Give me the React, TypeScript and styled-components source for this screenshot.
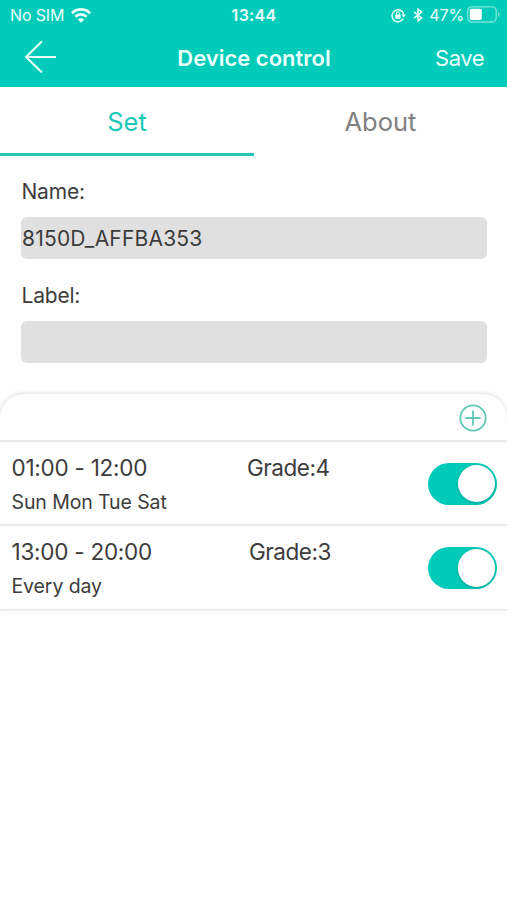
import React, { useState } from 'react';
import styled, { createGlobalStyle } from 'styled-components';

const teal = '#03cbb9';

const GlobalStyle = createGlobalStyle`
  * { box-sizing: border-box; }
  body {
    margin: 0;
    background: #fefefe;
    color: #3c3c3c;
    font-family: Inter, "Liberation Sans", sans-serif;
  }
`;

const Screen = styled.div`
  width: 507px;
  height: 900px;
  overflow: hidden;
  background: #fefefe;
`;

const PlainButton = styled.button`
  padding: 0;
  border: 0;
  background: none;
  color: inherit;
  font: inherit;
`;

const TopArea = styled.header`
  height: 87px;
  background: ${teal};
  color: #e9fffc;
`;

const StatusBar = styled.div`
  display: grid;
  grid-template-columns: 1fr auto 1fr;
  align-items: center;
  height: 30px;
  padding: 0 7px 0 10px;
  font-size: 16px;
  line-height: 30px;
`;

const StatusGroup = styled.div<{ $end?: boolean }>`
  display: flex;
  align-items: center;
  justify-content: ${(p) => (p.$end ? 'flex-end' : 'flex-start')};
  svg { flex: none; }
`;

const Carrier = styled.span`
  margin-right: 7px;
  letter-spacing: -0.15px;
`;

const Clock = styled.span`
  font-weight: 600;
  letter-spacing: 0.3px;
  transform: translateX(-1px);
`;

const Percent = styled.span`
  margin: 0 3px 0 6px;
  letter-spacing: -0.15px;
`;

const NavBar = styled.nav`
  display: grid;
  grid-template-columns: 1fr auto 1fr;
  align-items: center;
  height: 56px;
  padding: 0 23px 0 24px;
`;

const BackButton = styled(PlainButton)`
  display: flex;
  justify-self: start;
  margin-top: -2px;
`;

const Title = styled.h1`
  margin: 0;
  font-size: 22px;
  font-weight: 600;
`;

const SaveButton = styled(PlainButton)`
  justify-self: end;
  font-size: 22px;
  letter-spacing: -0.5px;
`;

const Tabs = styled.div`
  display: grid;
  grid-template-columns: 254px 253px;
  height: 68.5px;
`;

const Tab = styled(PlainButton)<{ $active: boolean }>`
  padding-top: 3px;
  font-size: 25.5px;
  color: ${(p) => (p.$active ? '#1ac9b8' : '#808080')};
  border-bottom: 3px solid ${(p) => (p.$active ? '#22c5b6' : 'transparent')};
`;

const Form = styled.div`
  padding: 22.5px 20px 0 21px;
`;

const Field = styled.label`
  display: block;
  height: 104px;
  font-size: 21px;
  line-height: 28px;
`;

const FieldName = styled.span`
  display: block;
  height: 39px;
  padding-left: 0.5px;
  letter-spacing: -0.2px;
`;

const TextInput = styled.input`
  display: block;
  width: 466px;
  height: 42px;
  padding: 0 0 0 1px;
  border: 0;
  border-radius: 6px;
  outline: none;
  background: #e0e0e0;
  color: inherit;
  font: inherit;
  letter-spacing: 0.2px;
`;

const Panel = styled.section`
  margin-top: 8px;
  border-radius: 24px 24px 0 0;
  background: #fefefe;
  box-shadow: 0 -1px 4px rgba(0, 0, 0, 0.12);
  clip-path: inset(-8px 0 0 0);
`;

const PanelHeader = styled.div`
  display: flex;
  justify-content: flex-end;
  align-items: center;
  height: 47.5px;
  padding: 3px 20px 0 0;
  border-bottom: 2px solid #e8e8e8;
`;

const AddButton = styled(PlainButton)`
  display: flex;
`;

const Row = styled.div`
  display: grid;
  grid-template-columns: 235.5px 1fr 69px;
  height: 84.5px;
  padding: 0 10px 0 11.5px;
  border-bottom: 2px solid #e8e8e8;
`;

const Schedule = styled.div`
  padding-top: 12px;
`;

const Line = styled.div`
  font-size: 22.5px;
  line-height: 28px;
  letter-spacing: -0.25px;
  white-space: nowrap;
`;

const Days = styled.div`
  margin-top: 6px;
  font-size: 19.5px;
  line-height: 28px;
  letter-spacing: -0.1px;
`;

const Grade = styled(Line)<{ $inset: number }>`
  padding-top: 12px;
  padding-left: ${(p) => p.$inset}px;
  letter-spacing: -0.45px;
`;

const Toggle = styled(PlainButton)<{ $on: boolean }>`
  display: flex;
  align-items: center;
  justify-content: ${(p) => (p.$on ? 'flex-end' : 'flex-start')};
  width: 69px;
  height: 42px;
  margin-top: 21px;
  padding: 0 2px;
  border-radius: 21px;
  background: ${(p) => (p.$on ? teal : '#d8d8d8')};
`;

const Knob = styled.span`
  width: 37.5px;
  height: 37.5px;
  border-radius: 50%;
  background: #fff;
  box-shadow: 0 1px 3px rgba(0, 60, 55, 0.3);
`;

const WifiIcon = () => (
  <svg width="20" height="15" viewBox="0 0 20 15" fill="none" stroke="currentColor" strokeWidth="2.7">
    <path d="M1 5.2C6 .2 14 .2 19 5.2" />
    <path d="M4.3 8.7c3.2-3.1 8.2-3.1 11.4 0" />
    <path d="M10 14.8 6.8 11.5c1.8-1.8 4.6-1.8 6.4 0Z" fill="currentColor" stroke="none" />
  </svg>
);

const LockIcon = () => (
  <svg width="15" height="15" viewBox="0 0 15 15" fill="none" stroke="currentColor" strokeWidth="1.4">
    <path d="M12.2 10.7A6 6 0 1 1 12.8 6.3" />
    <path d="M10.4 6.4H15l-2.2 3Z" fill="currentColor" stroke="none" />
    <rect x="4.2" y="6.5" width="5.4" height="4.2" rx=".6" fill="currentColor" stroke="none" />
    <path d="M5.4 7V5.4a1.5 1.5 0 0 1 3 0V7" strokeWidth="1.1" />
  </svg>
);

const BluetoothSvg = styled.svg`
  margin-left: 7px;
`;

const BluetoothIcon = () => (
  <BluetoothSvg width="10" height="14" viewBox="0 0 10 14" fill="none" stroke="currentColor" strokeWidth="1.5">
    <path d="m1 3.9 7.6 6L5 12.8V1.2l3.6 2.9L1 10.1" />
  </BluetoothSvg>
);

const BatterySvg = styled.svg`
  margin-top: -1px;
`;

const BatteryIcon = () => (
  <BatterySvg width="33" height="17" viewBox="0 0 33 17" fill="none">
    <rect x=".8" y=".8" width="28.4" height="15.2" rx="4" stroke="#7be5da" strokeWidth="1.3" />
    <rect x="2.8" y="2.8" width="12" height="11.2" rx="1.8" fill="#fff" />
    <path d="M31 6v5c2-.8 2-4.2 0-5Z" fill="#7be5da" />
  </BatterySvg>
);

const ArrowIcon = () => (
  <svg width="33" height="34" viewBox="0 0 33 34" fill="none" stroke="currentColor" strokeWidth="2">
    <path d="M32 17H2M18 1.2 2 17l16 15.5" />
  </svg>
);

const PlusIcon = () => (
  <svg width="28" height="28" viewBox="0 0 28 28" fill="none" stroke="#62c9b6" strokeWidth="1.8">
    <circle cx="14" cy="14" r="12.7" />
    <path d="M14 6.5v15M6.5 14h15" />
  </svg>
);

const schedules = [
  { time: '01:00 - 12:00', days: 'Sun Mon Tue Sat', grade: 4, inset: 0 },
  { time: '13:00 - 20:00', days: 'Every day', grade: 3, inset: 2 },
];

export default function App() {
  const [tab, setTab] = useState('Set');
  const [enabled, setEnabled] = useState([true, true]);
  return (
    <Screen>
      <GlobalStyle />
      <TopArea>
        <StatusBar>
          <StatusGroup>
            <Carrier>No SIM</Carrier>
            <WifiIcon />
          </StatusGroup>
          <Clock>13:44</Clock>
          <StatusGroup $end>
            <LockIcon />
            <BluetoothIcon />
            <Percent>47%</Percent>
            <BatteryIcon />
          </StatusGroup>
        </StatusBar>
        <NavBar>
          <BackButton aria-label="Back"><ArrowIcon /></BackButton>
          <Title>Device control</Title>
          <SaveButton>Save</SaveButton>
        </NavBar>
      </TopArea>
      <Tabs>
        {['Set', 'About'].map((name) => (
          <Tab key={name} $active={tab === name} onClick={() => setTab(name)}>{name}</Tab>
        ))}
      </Tabs>
      <Form>
        <Field>
          <FieldName>Name:</FieldName>
          <TextInput defaultValue="8150D_AFFBA353" />
        </Field>
        <Field>
          <FieldName>Label:</FieldName>
          <TextInput defaultValue="" />
        </Field>
      </Form>
      <Panel>
        <PanelHeader>
          <AddButton aria-label="Add schedule"><PlusIcon /></AddButton>
        </PanelHeader>
        {schedules.map((s, i) => (
          <Row key={s.time}>
            <Schedule>
              <Line>{s.time}</Line>
              <Days>{s.days}</Days>
            </Schedule>
            <Grade $inset={s.inset}>Grade:{s.grade}</Grade>
            <Toggle
              $on={enabled[i]}
              role="switch"
              aria-checked={enabled[i]}
              aria-label={s.time}
              onClick={() => setEnabled(enabled.map((v, j) => (j === i ? !v : v)))}
            >
              <Knob />
            </Toggle>
          </Row>
        ))}
      </Panel>
    </Screen>
  );
}
